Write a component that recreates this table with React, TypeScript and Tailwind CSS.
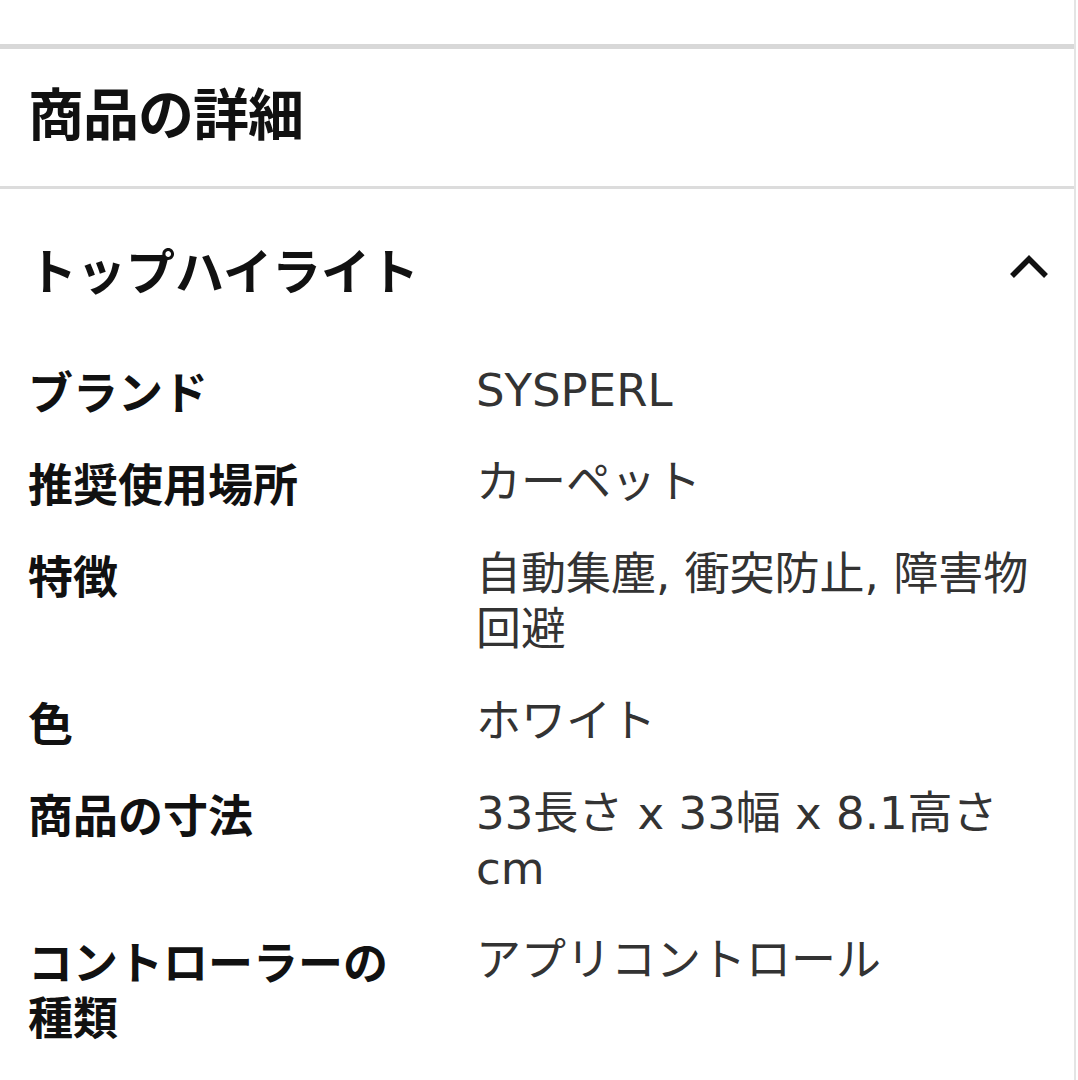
import React from "react";

const rows: { label: string; value: string }[] = [
  { label: "ブランド", value: "SYSPERL" },
  { label: "推奨使用場所", value: "カーペット" },
  { label: "特徴", value: "自動集塵, 衝突防止, 障害物回避" },
  { label: "色", value: "ホワイト" },
  { label: "商品の寸法", value: "33長さ x 33幅 x 8.1高さ cm" },
  { label: "コントローラーの種類", value: "アプリコントロール" },
];

export default function App() {
  return (
    <div
      className="w-[1078px] h-[1080px] overflow-hidden bg-white"
      style={{ fontFamily: '"Noto Sans CJK JP", "Noto Sans", sans-serif' }}
    >
      <div className="w-[1076px] h-[1080px] border-r-2 border-[#e4e4e4]">
        <div className="h-[44px]" />
        <div className="h-[5px] bg-[#d8d8d8]" />
        <div className="h-[137px] flex items-center pl-[28px] pb-[14px]">
          <h1 className="text-[56px] leading-[64px] font-semibold text-[#111] tracking-[-1px]">
            商品の詳細
          </h1>
        </div>
        <div className="h-[3px] bg-[#dcdcdc]" />
        <div className="pl-[28px] pr-[26px] pt-[50px]">
          <div className="flex items-center justify-between h-[60px]">
            <h2 className="text-[49px] leading-[60px] font-bold text-[#111]">
              トップハイライト
            </h2>
            <svg width="42" height="28" viewBox="0 0 42 28" className="-mr-[2px] -mt-[4px]">
              <polyline
                points="4,23 21,6 38,23"
                fill="none"
                stroke="#111"
                strokeWidth="5.5"
                strokeLinecap="butt"
                strokeLinejoin="miter"
              />
            </svg>
          </div>
          <div className="mt-[64px] grid grid-cols-[400px_556px] gap-x-[48px] gap-y-[37px]">
            {rows.map((r) => (
              <React.Fragment key={r.label}>
                <div className="text-[45px] leading-[55px] font-bold text-[#111]">
                  {r.label}
                </div>
                <div
                  className="text-[45px] leading-[55px] font-normal text-[#333]"
                  style={{ fontFamily: '"DejaVu Sans", "Noto Sans CJK JP", sans-serif' }}
                >
                  {r.value}
                </div>
              </React.Fragment>
            ))}
          </div>
        </div>
      </div>
    </div>
  );
}
